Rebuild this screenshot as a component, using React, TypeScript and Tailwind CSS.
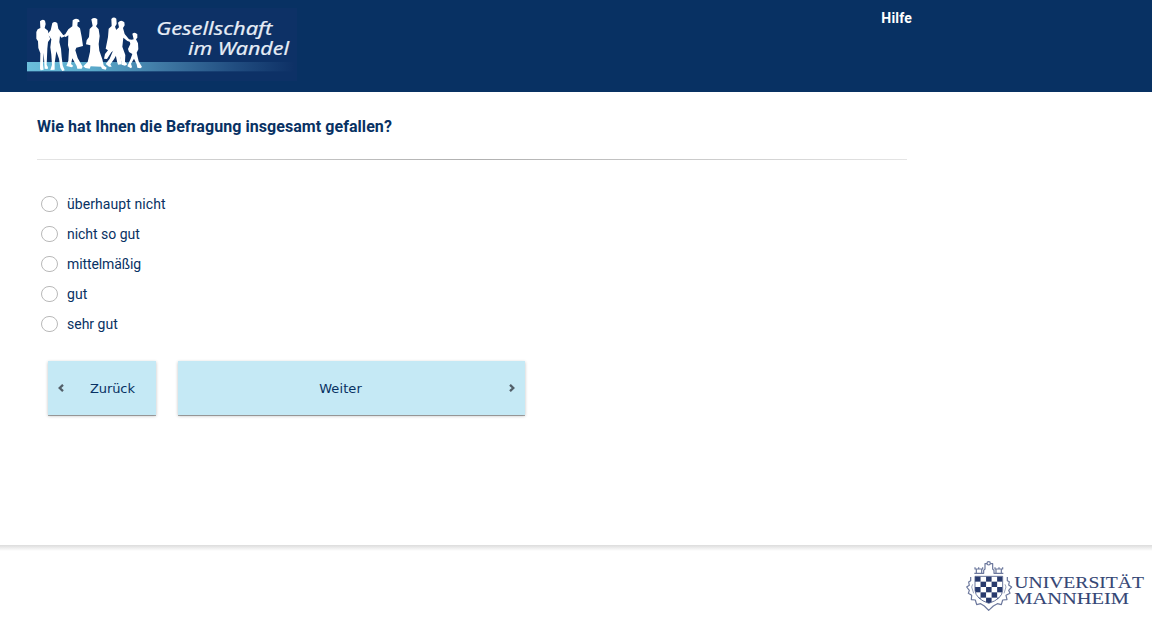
import React from 'react';

const options: { label: string; tracking: string }[] = [
  { label: 'überhaupt nicht', tracking: 'tracking-[0.08px]' },
  { label: 'nicht so gut', tracking: 'tracking-[-0.03px]' },
  { label: 'mittelmäßig', tracking: 'tracking-[-0.1px]' },
  { label: 'gut', tracking: 'tracking-[0.1px]' },
  { label: 'sehr gut', tracking: 'tracking-normal' },
];

function SurveyLogo() {
  return (
    <svg className="block h-[73px] w-[270px]" viewBox="21 24 810 219">
      <defs>
        <linearGradient id="stripe" x1="0" x2="1" y1="0" y2="0">
          <stop offset="0" stopColor="#6bbedb" />
          <stop offset="0.25" stopColor="#5aa9ca" />
          <stop offset="0.5" stopColor="#407aa5" />
          <stop offset="0.78" stopColor="#214d80" />
          <stop offset="1" stopColor="#0e3166" />
        </linearGradient>
      </defs>
      <rect x="21" y="24" width="810" height="219" fill="#0d3166" />
      <rect x="21" y="186" width="800" height="28" fill="url(#stripe)" />
      <g fill="#fff">
        <path d="M60 64 Q67 56 75 62 L77 72 L74 84 L84 92 L86 106 L91 116 L84 126 L82 146 L80 194 L84 202 L83 207 L74 206 L71 158 L69 194 L71 209 L62 211 L60 206 L61 160 L55 144 L54 124 L49 116 L49 96 L53 88 L61 84 Z" />
        <path d="M97 69 Q105 62 112 70 L115 86 L122 95 L130 106 L137 102 L132 110 L124 113 L120 108 L118 126 L123 146 L125 170 L128 196 L134 211 L127 213 L121 204 L117 176 L109 154 L104 190 L104 209 L91 210 L96 194 L94 164 L91 142 L94 118 L88 109 L81 104 L92 91 Z" />
        <path d="M158 61 Q166 52 177 59 L179 65 L173 67 L172 78 L180 85 L185 110 L189 138 L169 143 L166 151 L173 174 L188 200 L185 206 L172 206 L170 198 L157 175 L153 192 L160 198 L155 202 L139 198 L145 182 L147 148 L144 136 L145 106 L137 111 L132 109 L145 88 L157 79 Z" />
        <path d="M214 58 Q223 50 232 58 L232 72 L228 79 L236 88 L239 108 L236 132 L238 152 L247 178 L251 196 L260 203 L257 209 L246 206 L243 200 L212 199 L209 206 L196 204 L190 199 L203 186 L210 155 L211 136 L198 133 L200 121 L207 111 L209 87 L218 78 Z" />
        <path d="M274 57 Q281 49 289 56 L290 72 L285 80 L289 90 L287 148 L274 157 L261 177 L252 176 L255 162 L264 151 L257 146 L264 111 L266 86 L275 78 Z" />
        <path d="M294 68 Q303 57 313 67 L314 76 L309 84 L314 102 L327 118 L334 119 L332 126 L322 123 L310 113 L307 140 L316 165 L315 185 L322 193 L315 197 L305 194 L302 174 L293 158 L282 178 L271 193 L275 200 L267 200 L257 192 L269 176 L280 150 L286 92 L297 82 Z" />
        <path d="M286 160 L300 155 L305 193 L294 194 L291 184 Z" />
        <path d="M337 101 Q345 94 352 103 L352 113 L348 118 L354 130 L355 148 L350 158 L356 184 L366 201 L361 205 L352 203 L350 193 L342 176 L333 191 L336 201 L333 205 L322 199 L332 176 L337 162 L327 156 L324 147 L331 132 L328 121 L341 118 Z" />
      </g>
      <g fill="#e6edf6" fontFamily="'Noto Sans', sans-serif" fontStyle="italic" fontSize="54" stroke="#e6edf6" strokeWidth="0.6">
        <text x="409" y="106" textLength="348" lengthAdjust="spacingAndGlyphs">Gesellschaft</text>
        <text x="504" y="166" textLength="303" lengthAdjust="spacingAndGlyphs">im Wandel</text>
      </g>
    </svg>
  );
}

function UniversityLogo() {
  const cells: React.ReactNode[] = [];
  for (let r = 0; r < 5; r++)
    for (let c = 0; c < 5; c++)
      if ((r + c) % 2 === 0) cells.push(<rect key={`${r}-${c}`} x={60 + c * 16.6} y={124 + r * 16} width="16.6" height="16" />);
  return (
    <svg className="block h-[60px] w-[192px]" viewBox="15 60 576 180">
      <defs>
        <clipPath id="shield"><path d="M60 124 H143 V166 Q141 192 101.500 205 Q62 192 60 166 Z" /></clipPath>
      </defs>
      <g fill="#283a6d" clipPath="url(#shield)">{cells}</g>
      <g fill="none" stroke="#6c789d" strokeWidth="3.6" strokeLinejoin="round">
        <path d="M60 124 H143 V166 Q141 192 101.500 205 Q62 192 60 166 Z" strokeWidth="2.5" stroke="#4a5986" />
        <path d="M47 126 V137 L41 141 L43 151 L35 156 L43 166 L40 175 L50 181 L49 194 L61 195 L65 209 L77 206 L88 213 L101 226 L115 213 L127 206 L139 209 L143 195 L156 194 L153 181 L165 175 L161 166 L170 156 L161 150 L163 140 L157 137 V126" />
        <path d="M60 97 V102 H83 V97 M71 97 V102 M64 102 V114 M80 102 V114 M58 115 H86 V106 L90 102 V86 H96 M120 97 V102 H143 V97 M132 97 V102 M123 102 V114 M139 102 V114 M145 115 H117 V106 L113 102 V86 H106" />
        <circle cx="101" cy="85" r="5" />
        <path d="M53 148 L50 156 L56 175 M150 148 L153 156 L147 175" strokeWidth="2" />
      </g>
      <g fill="#354675" fontFamily="'Liberation Serif', serif" fontSize="51" stroke="#354675" strokeWidth="0.3">
        <text x="178" y="160" textLength="389" lengthAdjust="spacingAndGlyphs">UNIVERSITÄT</text>
        <text x="178" y="208" textLength="344" lengthAdjust="spacingAndGlyphs">MANNHEIM</text>
      </g>
    </svg>
  );
}

function Chevron({ right = false }: { right?: boolean }) {
  return (
    <svg className="h-[8px] w-[6px] shrink-0" viewBox="0 0 6 8" fill="none" stroke="#53606a" strokeWidth="2.3">
      <path d={right ? 'M1 .8 4.3 4 1 7.2' : 'M5 .8 1.7 4 5 7.2'} />
    </svg>
  );
}

export default function App() {
  return (
    <div className="flex h-[618px] w-[1152px] flex-col overflow-hidden bg-white font-['Roboto',sans-serif] text-[#083163]">
      <header className="flex h-[92px] shrink-0 justify-between bg-[#083163] pl-[27px] pr-[240px] pt-2">
        <SurveyLogo />
        <a className="text-[14px] font-bold leading-5 tracking-[0.2px] text-white">Hilfe</a>
      </header>
      <main className="flex h-[453px] shrink-0 flex-col pl-[37px] pt-[25px]">
        <h1 className="whitespace-nowrap text-[16px] font-bold leading-5 tracking-[0.06px]">Wie hat Ihnen die Befragung insgesamt gefallen?</h1>
        <div className="mt-[22px] h-px w-[870px] shrink-0 bg-linear-to-r from-[#e5e5e5] via-[#b0b0b0] to-[#e5e5e5]" />
        <div className="mt-[29px] flex flex-col pl-1">
          {options.map((o) => (
            <label key={o.label} className="flex h-[30px] items-center gap-[9px] text-[14px]">
              <span className="h-[16px] w-[17px] rounded-full border border-[#b9b9b9] bg-white" />
              <span className={o.tracking}>{o.label}</span>
            </label>
          ))}
        </div>
        <div className="mt-[22px] flex gap-[22px] pl-[11px] font-['DejaVu_Sans',sans-serif] text-[13px]">
          <button className="flex h-[54px] w-[108px] items-center bg-[#c5e9f5] pl-[10px] shadow-[0_1px_0_rgba(0,0,0,0.3),0_1px_3px_rgba(0,0,0,0.25)]">
            <Chevron />
            <span className="ml-[26px] pt-[2px] tracking-[-0.1px]">Zurück</span>
          </button>
          <button className="flex h-[54px] w-[347px] items-center bg-[#c5e9f5] pr-[10px] shadow-[0_1px_0_rgba(0,0,0,0.3),0_1px_3px_rgba(0,0,0,0.25)]">
            <span className="flex-1 pl-[9px] pr-[15px] pt-[2px] text-center tracking-[0.1px]">Weiter</span>
            <Chevron right />
          </button>
        </div>
      </main>
      <footer className="flex h-[73px] flex-col">
        <div className="h-[6px] shrink-0 bg-linear-to-b from-[#dcdcdc] to-white" />
        <div className="flex justify-end pt-1">
          <UniversityLogo />
        </div>
      </footer>
    </div>
  );
}
